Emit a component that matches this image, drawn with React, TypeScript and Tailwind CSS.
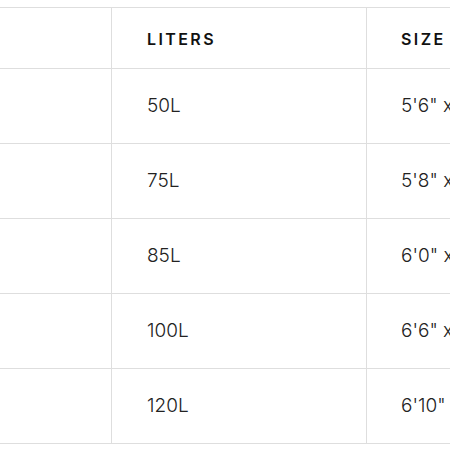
const rows = [
  { liters: "50L", size: `5'6" x 20" x 2.5"` },
  { liters: "75L", size: `5'8" x 21" x 2.75"` },
  { liters: "85L", size: `6'0" x 21.5" x 2.75"` },
  { liters: "100L", size: `6'6" x 22" x 3"` },
  { liters: "120L", size: `6'10" x 23" x 3.25"` },
];

const App = () => {
  return (
    <div className="w-[450px] h-[450px] overflow-hidden bg-white font-['Inter',sans-serif]">
      <div className="mt-[7px] border-t border-[#dedede] w-[700px]">
        <div className="flex h-[61px] border-b border-[#dedede]">
          <div className="w-[112px] shrink-0 border-r border-[#dedede]"></div>
          <div className="w-[255px] shrink-0 border-r border-[#dedede] flex items-center pl-[35px] pt-[2px]">
            <span className="text-[16px] font-semibold tracking-[0.15em] text-[#111]">LITERS</span>
          </div>
          <div className="flex-1 flex items-center pl-[34px] pt-[2px]">
            <span className="text-[16px] font-semibold tracking-[0.15em] text-[#111]">SIZE</span>
          </div>
        </div>
        {rows.map((r) => (
          <div key={r.liters} className="flex h-[75px] border-b border-[#dedede]">
            <div className="w-[112px] shrink-0 border-r border-[#dedede]"></div>
            <div className="w-[255px] shrink-0 border-r border-[#dedede] flex items-center pl-[35px] pt-[1px]">
              <span className="text-[19px] font-light text-[#222]">{r.liters}</span>
            </div>
            <div className="flex-1 flex items-center pl-[34px] pt-[1px]">
              <span className="text-[19px] font-light text-[#222] whitespace-nowrap">{r.size}</span>
            </div>
          </div>
        ))}
      </div>
    </div>
  );
};

export default App;
